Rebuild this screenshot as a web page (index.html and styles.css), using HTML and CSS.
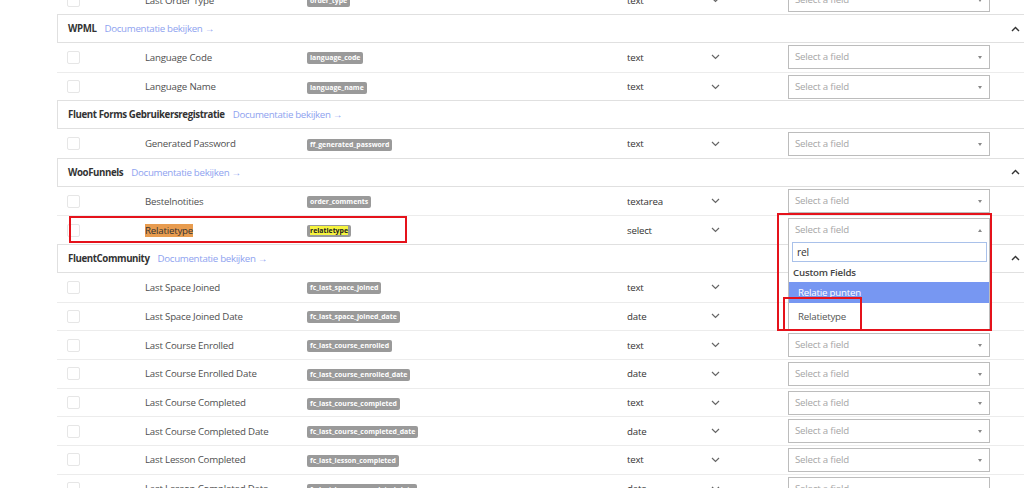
FILE: index.html
```html
<!DOCTYPE html>
<html lang="nl">
<head>
  <meta charset="UTF-8">
  <title>Veldkoppelingen</title>
  <link rel="stylesheet" href="styles.css">
</head>
<body>
  <div class="fields">
    <div class="row">
      <span class="check"></span>
      <span class="label">Last Order Type</span>
      <span class="key"><code>order_type</code></span>
      <span class="type">text</span>
      <span class="chev"><svg width="9" height="6" viewBox="0 0 9 6"><path d="M1 1l3.5 3.5L8 1" fill="none" stroke="#666" stroke-width="1.2"/></svg></span>
      <span class="pick"><span class="select">Select a field<i class="arrow"></i></span></span>
    </div>

    <div class="group">
      <b>WPML</b><a href="#">Documentatie bekijken →</a>
      <svg class="caret" width="9" height="6" viewBox="0 0 9 6"><path d="M1 5l3.5-3.5L8 5" fill="none" stroke="#333" stroke-width="1.4"/></svg>
    </div>
    <div class="row">
      <span class="check"></span>
      <span class="label">Language Code</span>
      <span class="key"><code>language_code</code></span>
      <span class="type">text</span>
      <span class="chev"><svg width="9" height="6" viewBox="0 0 9 6"><path d="M1 1l3.5 3.5L8 1" fill="none" stroke="#666" stroke-width="1.2"/></svg></span>
      <span class="pick"><span class="select">Select a field<i class="arrow"></i></span></span>
    </div>
    <div class="row">
      <span class="check"></span>
      <span class="label">Language Name</span>
      <span class="key"><code>language_name</code></span>
      <span class="type">text</span>
      <span class="chev"><svg width="9" height="6" viewBox="0 0 9 6"><path d="M1 1l3.5 3.5L8 1" fill="none" stroke="#666" stroke-width="1.2"/></svg></span>
      <span class="pick"><span class="select">Select a field<i class="arrow"></i></span></span>
    </div>

    <div class="group">
      <b>Fluent Forms Gebruikersregistratie</b><a href="#">Documentatie bekijken →</a>
    </div>
    <div class="row">
      <span class="check"></span>
      <span class="label">Generated Password</span>
      <span class="key"><code>ff_generated_password</code></span>
      <span class="type">text</span>
      <span class="chev"><svg width="9" height="6" viewBox="0 0 9 6"><path d="M1 1l3.5 3.5L8 1" fill="none" stroke="#666" stroke-width="1.2"/></svg></span>
      <span class="pick"><span class="select">Select a field<i class="arrow"></i></span></span>
    </div>

    <div class="group">
      <b>WooFunnels</b><a href="#">Documentatie bekijken →</a>
      <svg class="caret" width="9" height="6" viewBox="0 0 9 6"><path d="M1 5l3.5-3.5L8 5" fill="none" stroke="#333" stroke-width="1.4"/></svg>
    </div>
    <div class="row">
      <span class="check"></span>
      <span class="label">Bestelnotities</span>
      <span class="key"><code>order_comments</code></span>
      <span class="type">textarea</span>
      <span class="chev"><svg width="9" height="6" viewBox="0 0 9 6"><path d="M1 1l3.5 3.5L8 1" fill="none" stroke="#666" stroke-width="1.2"/></svg></span>
      <span class="pick"><span class="select">Select a field<i class="arrow"></i></span></span>
    </div>
    <div class="row marked">
      <span class="check"></span>
      <span class="label"><mark class="orange">Relatietype</mark></span>
      <span class="key"><code><mark>relatietype</mark></code></span>
      <span class="type">select</span>
      <span class="chev"><svg width="9" height="6" viewBox="0 0 9 6"><path d="M1 1l3.5 3.5L8 1" fill="none" stroke="#666" stroke-width="1.2"/></svg></span>
      <span class="pick">
        <span class="select open">Select a field<i class="arrow"></i></span>
        <div class="dropdown">
          <div class="search">rel</div>
          <div class="optgroup">Custom Fields</div>
          <div class="option active">Relatie punten</div>
          <div class="option">Relatietype</div>
        </div>
        <span class="note note-list"></span>
        <span class="note note-option"></span>
      </span>
      <span class="note note-row"></span>
    </div>

    <div class="group">
      <b>FluentCommunity</b><a href="#">Documentatie bekijken →</a>
      <svg class="caret" width="9" height="6" viewBox="0 0 9 6"><path d="M1 5l3.5-3.5L8 5" fill="none" stroke="#333" stroke-width="1.4"/></svg>
    </div>
    <div class="row">
      <span class="check"></span>
      <span class="label">Last Space Joined</span>
      <span class="key"><code>fc_last_space_joined</code></span>
      <span class="type">text</span>
      <span class="chev"><svg width="9" height="6" viewBox="0 0 9 6"><path d="M1 1l3.5 3.5L8 1" fill="none" stroke="#666" stroke-width="1.2"/></svg></span>
      <span class="pick"><span class="select">Select a field<i class="arrow"></i></span></span>
    </div>
    <div class="row">
      <span class="check"></span>
      <span class="label">Last Space Joined Date</span>
      <span class="key"><code>fc_last_space_joined_date</code></span>
      <span class="type">date</span>
      <span class="chev"><svg width="9" height="6" viewBox="0 0 9 6"><path d="M1 1l3.5 3.5L8 1" fill="none" stroke="#666" stroke-width="1.2"/></svg></span>
      <span class="pick"><span class="select">Select a field<i class="arrow"></i></span></span>
    </div>
    <div class="row">
      <span class="check"></span>
      <span class="label">Last Course Enrolled</span>
      <span class="key"><code>fc_last_course_enrolled</code></span>
      <span class="type">text</span>
      <span class="chev"><svg width="9" height="6" viewBox="0 0 9 6"><path d="M1 1l3.5 3.5L8 1" fill="none" stroke="#666" stroke-width="1.2"/></svg></span>
      <span class="pick"><span class="select">Select a field<i class="arrow"></i></span></span>
    </div>
    <div class="row">
      <span class="check"></span>
      <span class="label">Last Course Enrolled Date</span>
      <span class="key"><code>fc_last_course_enrolled_date</code></span>
      <span class="type">date</span>
      <span class="chev"><svg width="9" height="6" viewBox="0 0 9 6"><path d="M1 1l3.5 3.5L8 1" fill="none" stroke="#666" stroke-width="1.2"/></svg></span>
      <span class="pick"><span class="select">Select a field<i class="arrow"></i></span></span>
    </div>
    <div class="row">
      <span class="check"></span>
      <span class="label">Last Course Completed</span>
      <span class="key"><code>fc_last_course_completed</code></span>
      <span class="type">text</span>
      <span class="chev"><svg width="9" height="6" viewBox="0 0 9 6"><path d="M1 1l3.5 3.5L8 1" fill="none" stroke="#666" stroke-width="1.2"/></svg></span>
      <span class="pick"><span class="select">Select a field<i class="arrow"></i></span></span>
    </div>
    <div class="row">
      <span class="check"></span>
      <span class="label">Last Course Completed Date</span>
      <span class="key"><code>fc_last_course_completed_date</code></span>
      <span class="type">date</span>
      <span class="chev"><svg width="9" height="6" viewBox="0 0 9 6"><path d="M1 1l3.5 3.5L8 1" fill="none" stroke="#666" stroke-width="1.2"/></svg></span>
      <span class="pick"><span class="select">Select a field<i class="arrow"></i></span></span>
    </div>
    <div class="row">
      <span class="check"></span>
      <span class="label">Last Lesson Completed</span>
      <span class="key"><code>fc_last_lesson_completed</code></span>
      <span class="type">text</span>
      <span class="chev"><svg width="9" height="6" viewBox="0 0 9 6"><path d="M1 1l3.5 3.5L8 1" fill="none" stroke="#666" stroke-width="1.2"/></svg></span>
      <span class="pick"><span class="select">Select a field<i class="arrow"></i></span></span>
    </div>
    <div class="row">
      <span class="check"></span>
      <span class="label">Last Lesson Completed Date</span>
      <span class="key"><code>fc_last_lesson_completed_date</code></span>
      <span class="type">date</span>
      <span class="chev"><svg width="9" height="6" viewBox="0 0 9 6"><path d="M1 1l3.5 3.5L8 1" fill="none" stroke="#666" stroke-width="1.2"/></svg></span>
      <span class="pick"><span class="select">Select a field<i class="arrow"></i></span></span>
    </div>
  </div>
</body>
</html>
```

FILE: styles.css
```css
html, body {
  margin: 0;
  background: #fff;
  overflow: hidden;
}
body {
  font-family: "Open Sans", "Noto Sans", sans-serif;
  font-size: 9.7px;
  letter-spacing: -0.2px;
  color: #555;
}
.fields {
  width: 975px;
  margin: -14.4px 0 0 57px;
}

/* field rows */
.row {
  position: relative;
  display: grid;
  grid-template-columns: 88px 162px 320px 83px 78px 202px 1fr;
  align-items: center;
  height: 28.73px;
  box-sizing: border-box;
  border-top: 1px solid #ececec;
}
.group + .row {
  border-top: 0;
}
.check {
  width: 11px;
  height: 11px;
  margin-left: 10px;
  border: 1px solid #e6e6e6;
  border-radius: 2px;
}
.label {
  color: #505050;
}
.key code {
  display: inline-block;
  height: 12px;
  line-height: 12px;
  padding: 0 3px;
  border-radius: 2px;
  background: #9a9a9a;
  color: #fff;
  font-family: "Open Sans", sans-serif;
  font-size: 6.9px;
  font-weight: 700;
  letter-spacing: 0;
}
.type {
  color: #333;
}
.chev svg {
  display: block;
  margin-left: 1px;
}

/* select */
.pick {
  position: relative;
}
.select {
  position: relative;
  display: block;
  height: 24px;
  line-height: 22px;
  box-sizing: border-box;
  padding-left: 6px;
  border: 1px solid #bcbcbc;
  color: #a6a6a6;
  background: #fff;
}
.arrow {
  position: absolute;
  right: 7px;
  top: 10px;
  border-left: 2.5px solid transparent;
  border-right: 2.5px solid transparent;
  border-top: 3px solid #888;
}
.select.open .arrow {
  border-top: 0;
  border-bottom: 3px solid #888;
}
.dropdown {
  position: absolute;
  left: 0;
  right: 0;
  top: 23px;
  z-index: 2;
  height: 89px;
  box-sizing: border-box;
  border: 1px solid #bcbcbc;
  border-top: 0;
  background: #fff;
}
.search {
  height: 20px;
  line-height: 18px;
  margin: 1px 2px 0 3px;
  padding-left: 4px;
  box-sizing: border-box;
  border: 1px solid #a9c1ea;
  color: #333;
  font-size: 10.3px;
}
.optgroup {
  height: 20px;
  line-height: 22px;
  padding-left: 4px;
  color: #444;
  font-weight: 600;
}
.option {
  height: 21px;
  line-height: 21px;
  padding-left: 9px;
  color: #555;
}
.option.active {
  background: #7797f2;
  color: #fff;
}
.option + .option {
  height: 26px;
  line-height: 28px;
}

/* highlights and annotations */
mark {
  background: #f6f43e;
  color: #222;
}
.orange {
  background: #e89c4f;
  color: #333;
}
.group {
  display: flex;
  align-items: center;
  gap: 8px;
  height: 28.73px;
  box-sizing: border-box;
  padding: 0 10px;
  border: 1px solid #e0e0e0;
  border-right: 0;
}
.group b {
  color: #333;
  font-weight: 700;
  letter-spacing: -0.4px;
}
.group a {
  color: #8ea2ef;
  text-decoration: none;
  letter-spacing: -0.3px;
}
.caret {
  margin-left: auto;
  margin-right: 2px;
}
.note {
  position: absolute;
  z-index: 3;
  border: 2px solid #e5121b;
  pointer-events: none;
}
.note-row {
  left: 12px;
  top: 0;
  width: 334px;
  height: 23px;
}
.note-list {
  left: -11px;
  top: -5px;
  width: 211px;
  height: 114px;
}
.note-option {
  left: -5px;
  top: 79px;
  width: 75px;
  height: 30px;
}
```
